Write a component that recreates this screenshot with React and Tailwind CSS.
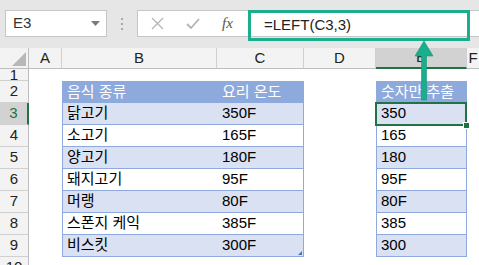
import React from 'react';

const FONT = { fontFamily: '"Liberation Sans", "Noto Sans CJK KR", sans-serif' };

const rowsB = [
  ['닭고기', '350F', '350'],
  ['소고기', '165F', '165'],
  ['양고기', '180F', '180'],
  ['돼지고기', '95F', '95F'],
  ['머랭', '80F', '80F'],
  ['스폰지 케익', '385F', '385'],
  ['비스킷', '300F', '300'],
];

function ColHead({ label, selected, last }) {
  return (
    <div
      className={`h-[21px] flex items-center justify-center text-[15px] text-[#222] border-r border-[#d0d0d0] ${
        selected ? 'bg-[#d2d2d2] border-b-2 border-b-[#217346] text-[#1b1b1b]' : 'bg-[#f3f3f3] border-b border-b-[#bdbdbd]'
      } ${last ? 'border-r-0' : ''}`}
    >
      {label}
    </div>
  );
}

function RowHead({ n, h, selected }) {
  return (
    <div
      className={`flex items-center justify-center text-[15px] border-b border-[#d0d0d0] ${
        selected ? 'bg-[#d2d2d2] border-r-2 border-r-[#217346] text-[#217346]' : 'bg-[#f3f3f3] border-r border-r-[#bdbdbd] text-[#222]'
      } ${h}`}
    >
      {n}
    </div>
  );
}

export default function App() {
  return (
    <div className="w-[479px] h-[265px] overflow-hidden relative bg-white" style={FONT}>
      {/* formula bar */}
      <div className="h-[48px] bg-[#e6e6e6] flex items-start pt-[10px] pl-[5px]">
        <div className="w-[102px] h-[27px] bg-white border border-[#c6c6c6] flex items-center justify-between pl-[7px] pr-[6px] text-[15px] text-[#333]">
          <span>E3</span>
          <svg width="9" height="5" viewBox="0 0 9 5"><path d="M0 0h9L4.5 5z" fill="#7a7a7a" /></svg>
        </div>
        <div className="w-[30px] h-[27px] flex flex-col items-center justify-center gap-[3px]">
          <div className="w-[2px] h-[2px] bg-[#a8a8a8]" />
          <div className="w-[2px] h-[2px] bg-[#a8a8a8]" />
          <div className="w-[2px] h-[2px] bg-[#a8a8a8]" />
        </div>
        <div className="flex-1 h-[27px] bg-white border border-r-0 border-[#c6c6c6] flex items-center pl-[13px]">
          <svg width="13" height="13" viewBox="0 0 13 13"><path d="M1 1l11 11M12 1L1 12" stroke="#b4b4b4" strokeWidth="1.3" /></svg>
          <svg className="ml-[22px]" width="14" height="11" viewBox="0 0 14 11"><path d="M1 6l4 4 8-9" stroke="#b4b4b4" strokeWidth="1.8" fill="none" /></svg>
          <span className="ml-[22px] text-[15px] italic text-[#555]" style={{ fontFamily: '"Liberation Serif", serif' }}>fx</span>
        </div>
      </div>

      {/* grid */}
      <div className="grid grid-cols-[29px_33px_155px_87px_72px_91px_1fr] grid-rows-[21px_12px_repeat(8,22px)_22px] text-[15px] text-black">
        {/* header row */}
        <div className="h-[21px] bg-[#f3f3f3] border-r border-r-[#bdbdbd] border-b border-b-[#bdbdbd] relative overflow-hidden">
          <svg className="absolute right-[2px] bottom-[2px]" width="14" height="14" viewBox="0 0 14 14"><path d="M14 0v14H0z" fill="#b8b8b8" /></svg>
        </div>
        <ColHead label="A" />
        <ColHead label="B" />
        <ColHead label="C" />
        <ColHead label="D" />
        <ColHead label="E" selected />
        <ColHead label="F" last />

        {/* row 1 */}
        <div className="h-[12px] bg-[#f3f3f3] border-r border-r-[#bdbdbd] border-b border-[#d0d0d0] overflow-hidden flex justify-center">
          <span className="-mt-[5px] text-[15px] text-[#222]">1</span>
        </div>
        <div className="col-span-6" />

        {/* row 2 headers */}
        <RowHead n={2} h="h-[22px]" />
        <div />
        <div className="bg-[#8ea9db] text-white pl-[5px] flex items-center">음식 종류</div>
        <div className="bg-[#8ea9db] text-white pl-[5px] flex items-center">요리 온도</div>
        <div />
        <div className="bg-[#8ea9db] text-white pl-[5px] flex items-center">숫자만 추출</div>
        <div />

        {rowsB.map((r, i) => {
          const band = i % 2 === 0 ? 'bg-[#d9e1f2]' : 'bg-white';
          const n = i + 3;
          return (
            <React.Fragment key={n}>
              <RowHead n={n} h="h-[22px]" selected={n === 3} />
              <div />
              <div className={`${band} border-l border-b border-[#8ea9db] pl-[4px] flex items-center`}>{r[0]}</div>
              <div className={`${band} border-r border-b border-[#8ea9db] pl-[5px] flex items-center relative`}>
                {r[1]}
                {n === 9 && (
                  <svg className="absolute right-[1px] bottom-[1px]" width="4" height="4" viewBox="0 0 4 4"><path d="M4 0v4H0z" fill="#4472c4" /></svg>
                )}
              </div>
              <div />
              <div className={`${band} border-l border-r border-b border-[#8ea9db] pl-[4px] flex items-center`}>{r[2]}</div>
              <div />
            </React.Fragment>
          );
        })}

        <RowHead n={10} h="h-[22px]" />
        <div className="col-span-6" />
      </div>

      {/* selected cell E3 */}
      <div className="absolute left-[375px] top-[102px] w-[92px] h-[24px] border-2 border-[#217346]" />
      <div className="absolute left-[463px] top-[122px] w-[7px] h-[7px] bg-[#217346] border border-white" />

      {/* formula highlight */}
      <div className="absolute left-[248px] top-[10px] w-[222px] h-[31px] border-[3px] border-[#1aae8c] flex items-center pl-[13px] text-[15px] text-[#222]">
        =LEFT(C3,3)
      </div>

      {/* arrow */}
      <svg className="absolute left-[410px] top-[38px]" width="28" height="64" viewBox="0 0 28 64">
        <path d="M14 3L5 18h6.5v44h5V18H23z" fill="#1aae8c" stroke="#14967a" strokeWidth="0.6" />
      </svg>
    </div>
  );
}
